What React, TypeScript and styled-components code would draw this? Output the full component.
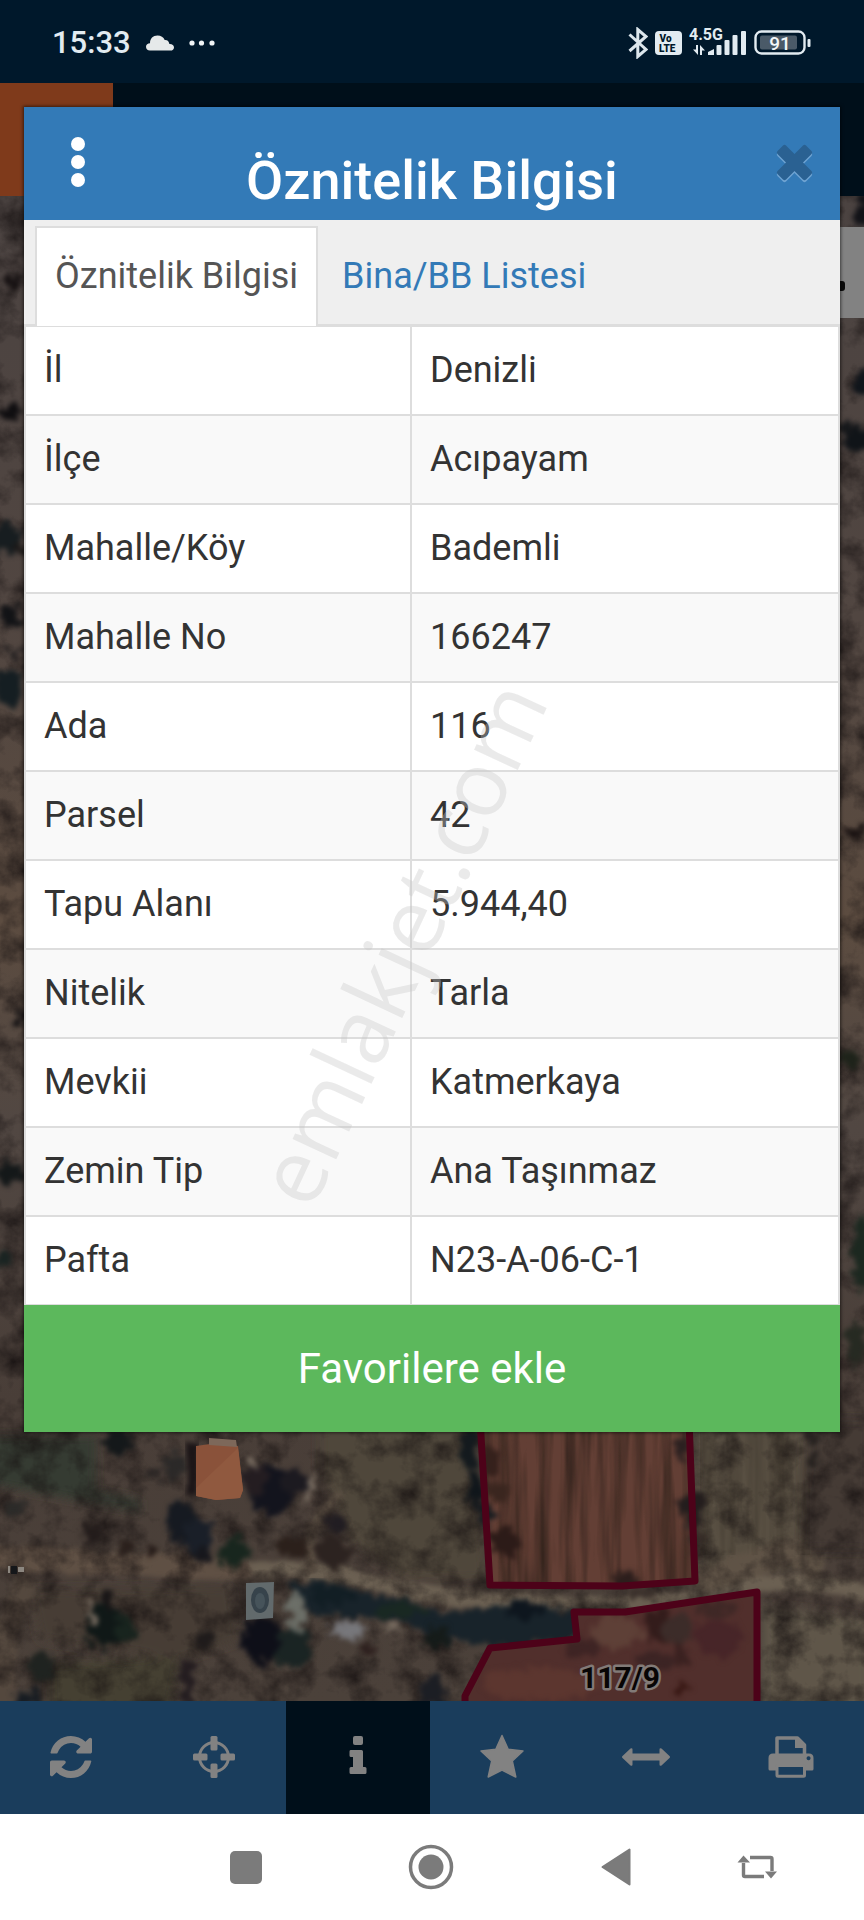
import React, { useState } from "react";
import styled, { createGlobalStyle } from "styled-components";

const GlobalStyle = createGlobalStyle`
  *, *::before, *::after { box-sizing: border-box; }
  html, body { margin: 0; padding: 0; }
  body { font-family: Roboto, "Noto Sans", sans-serif; background: #00182b; color: #333; }
  button { font: inherit; color: inherit; border: 0; padding: 0; background: none; cursor: pointer; }
`;

const Screen = styled.div`
  display: flex;
  flex-direction: column;
  min-height: 100vh;
`;

/* ---------- status bar ---------- */

const StatusBar = styled.header`
  display: flex;
  align-items: center;
  justify-content: space-between;
  height: 83px;
  padding: 2px 52px 0;
  background: #00182b;
  color: #e2ebf1;
`;

const StatusGroup = styled.div<{ $gap: number }>`
  display: flex;
  align-items: center;
  gap: ${(p) => p.$gap}px;
`;

const Clock = styled.time`
  font-size: 31px;
  line-height: 36px;
  font-weight: 500;
`;

/* ---------- stage: map page with the dialog over it ---------- */

const Stage = styled.main`
  position: relative;
  flex: 1;
  overflow: hidden;
`;

const Backdrop = styled.div`
  position: absolute;
  inset: 0;
  display: flex;
  flex-direction: column;
`;

const AppHeader = styled.div`
  height: 113px;
  background: #000f1a;
  flex: none;
`;

const Brand = styled.div`
  width: 113px;
  height: 100%;
  background: #7f3a1b;
`;

const MapArea = styled.div`
  position: relative;
  flex: 1;
  min-height: 0;
  background: #4b413a;

  > svg { display: block; width: 100%; height: 100%; }
`;

const SearchStrip = styled.div`
  position: absolute;
  top: 31px;
  right: 0;
  width: 60px;
  height: 91px;
  display: flex;
  align-items: center;
  justify-content: center;
  padding-top: 26px;
  background: #828282;
`;

const StripMark = styled.span`
  width: 22px;
  height: 10px;
  border-radius: 3px;
  background: #0a0a0a;
`;

/* ---------- dialog ---------- */

const Dialog = styled.section`
  position: relative;
  margin: 24px 24px 0;
  background: #fff;
  box-shadow: 0 0 3px 1px rgba(0, 0, 0, 0.55);
`;

const DialogHeader = styled.div`
  display: grid;
  grid-template-columns: 108px 1fr 108px;
  align-items: center;
  height: 113px;
  background: #337ab7;
  color: #fff;
`;

const Title = styled.h1`
  margin: 0;
  padding-top: 35px;
  font-size: 54px;
  line-height: 56px;
  font-weight: 500;
  text-align: center;
  white-space: nowrap;
`;

const HeaderButton = styled.button<{ $align?: string }>`
  display: flex;
  align-items: center;
  justify-content: ${(p) => p.$align ?? "center"};
  height: 100%;
  padding: 0 26px;
`;

const Tabs = styled.div`
  display: flex;
  gap: 4px;
  height: 106px;
  padding: 6px 11px 0;
  background: #efefef;
  border-bottom: 2px solid #ddd;
`;

const Tab = styled.button<{ $active: boolean }>`
  height: 100px;
  padding: 0 18px 2px;
  border: 2px solid ${(p) => (p.$active ? "#ddd" : "transparent")};
  border-bottom: 0;
  background: ${(p) => (p.$active ? "#fff" : "transparent")};
  color: ${(p) => (p.$active ? "#555" : "#337ab7")};
  font-size: 36px;
  line-height: 45px;
  white-space: nowrap;
`;

const Attributes = styled.table`
  width: 100%;
  table-layout: fixed;
  border-collapse: separate;
  border-spacing: 0;
  border: solid #ddd;
  border-width: 1px 2px 0;
  font-size: 36px;
  line-height: 45px;

  tr:nth-child(even) { background: #f9f9f9; }

  th, td {
    padding: 21px 18px;
    font-weight: 400;
    text-align: left;
    border-bottom: 2px solid #ddd;
  }

  tr:last-child th, tr:last-child td { border-bottom-width: 1px; }

  th { width: 386px; border-right: 2px solid #ddd; }

  @media (max-width: 700px) {
    th { width: 47%; }
  }
`;

const FavoriteButton = styled.button`
  display: block;
  width: 100%;
  height: 127px;
  background: #5cb85c;
  color: #fff;
  font-size: 42px;
  line-height: 48px;
`;

const Watermark = styled.span`
  position: absolute;
  left: 46%;
  top: 63%;
  transform: translate(-50%, -50%) rotate(-65deg);
  font-family: "Open Sans", sans-serif;
  font-size: 90px;
  line-height: 90px;
  white-space: nowrap;
  color: #c6c6c6;
  opacity: 0.35;
  pointer-events: none;
`;

/* ---------- bottom bars ---------- */

const Toolbar = styled.nav`
  display: grid;
  grid-template-columns: 142fr repeat(4, 144fr) 146fr;
  height: 113px;
  background: #1a3d5c;
`;

const Tool = styled.button<{ $active: boolean }>`
  display: flex;
  align-items: center;
  justify-content: center;
  padding-bottom: 2px;
  background: ${(p) => (p.$active ? "#000f1a" : "transparent")};
  color: #828282;
`;

const SystemNav = styled.nav`
  display: grid;
  grid-template-columns: 154fr 184fr 186fr 184fr 98fr 58fr;
  height: 106px;
  background: #fff;
  color: #7b7b7b;

  button:first-child { grid-column-start: 2; }
`;

const NavButton = styled.button`
  display: flex;
  align-items: center;
  justify-content: center;
`;

/* ---------- status icons ---------- */

const CloudIcon = () => (
  <svg width="28" height="16" viewBox="0 0 28 16" fill="#e6e9ea" aria-hidden="true">
    <path d="M4 15.500C1.500 15.500 0 14 0 11.800 0 9.500 1.800 8.200 4 8.200 4 3.500 7 .5 11.500.5c3.500 0 6 1.600 7.200 4.500 2.800-.2 4.300 1.500 4.700 4 2.600-.2 4.600 1.200 4.600 3.400 0 2-1.500 3.100-3.600 3.100z" />
  </svg>
);

const MoreDots = () => (
  <svg width="26" height="6" viewBox="0 0 26 6" fill="#f0f4f6" aria-hidden="true">
    <circle cx="3" cy="3" r="2.600" />
    <circle cx="12.500" cy="3" r="2.600" />
    <circle cx="23" cy="3" r="2.600" />
  </svg>
);

const BluetoothIcon = () => (
  <svg width="20" height="32" viewBox="0 0 20 32" fill="none" stroke="#dce6ec" strokeWidth="3" aria-hidden="true">
    <path d="M1.500 7.500 18 22.500 9.800 29.500V2.500L18 9.500 1.500 24" />
  </svg>
);

const VolteIcon = () => (
  <svg width="27" height="24" viewBox="0 0 27 24" aria-label="VoLTE">
    <rect width="27" height="24" rx="4" fill="#e2ebf1" />
    <g fill="#00182b" fontFamily="Roboto, sans-serif" fontWeight="900">
      <text x="4.500" y="11" fontSize="10">Vo</text>
      <text x="4" y="21" fontSize="10">LTE</text>
    </g>
  </svg>
);

const SignalIcon = () => (
  <svg width="58" height="42" viewBox="0 -6 58 42" fill="#e2ebf1" aria-label="4.5G">
    <text x="0" y="12" fontSize="16" fontWeight="700" fontFamily="Roboto, sans-serif">4.5G</text>
    <path d="M9 17v10L4 21.500h3V17zM11 27v-10l5 5.500h-3V27z" />
    <path d="M19 27v-3l6-3v6z" />
    <rect x="27.500" y="17" width="5" height="10" rx="1" />
    <rect x="35.500" y="12" width="5" height="15" rx="1" />
    <rect x="43.500" y="7" width="5" height="20" rx="1" />
    <rect x="52" y="3" width="5" height="24" rx="1" />
  </svg>
);

const BatteryIcon = () => (
  <svg width="58" height="26" viewBox="0 0 58 26" aria-label="91">
    <rect x="1.500" y="1.500" width="49" height="22" rx="6" fill="none" stroke="#e2ebf1" strokeWidth="2.400" />
    <rect x="6" y="5.500" width="37" height="14" rx="2" fill="#4a5a68" />
    <rect x="53.500" y="9" width="3" height="8" rx="1" fill="#e2ebf1" />
    <text x="26" y="19.500" textAnchor="middle" fontSize="19" fontWeight="500" fontFamily="Roboto, sans-serif" fill="#f2f6f8">91</text>
  </svg>
);

/* ---------- dialog icons ---------- */

const KebabIcon = () => (
  <svg width="14" height="54" viewBox="0 0 14 54" fill="#fff" aria-hidden="true">
    <circle cx="7" cy="7" r="7" />
    <circle cx="7" cy="25" r="7" />
    <circle cx="7" cy="43" r="7" />
  </svg>
);

const CROSS =
  "M10 1.500 18.500 10 27 1.500q1.500-1.500 3 0l5.500 5.500q1.500 1.500 0 3L27 18.500l8.500 8.500q1.500 1.500 0 3L30 35.500q-1.500 1.500-3 0L18.500 27 10 35.500q-1.500 1.500-3 0L1.500 30q-1.500-1.500 0-3L10 18.500 1.500 10Q0 8.500 1.500 7L7 1.500q1.500-1.500 3 0z";

const CloseIcon = () => (
  <svg width="38" height="40" viewBox="0 0 38 40" aria-hidden="true">
    <path d={CROSS} fill="#6ea3d2" transform="translate(0 2)" />
    <path d={CROSS} fill="#2a6192" />
  </svg>
);

/* ---------- toolbar icons ---------- */

const RefreshIcon = () => (
  <svg width="42" height="42" viewBox="0 0 1536 1536" fill="currentColor" aria-hidden="true">
    <path d="M1511 928q0 5-1 7-64 268-268 434.500T764 1536q-146 0-282.500-55T238 1324l-129 129q-19 19-45 19t-45-19-19-45V960q0-26 19-45t45-19h448q26 0 45 19t19 45-19 45l-137 137q71 66 161 102t187 36q134 0 250-65t186-179q11-17 53-117 8-23 30-23h192q13 0 22.500 9.500t9.500 22.500zm25-800v448q0 26-19 45t-45 19h-448q-26 0-45-19t-19-45 19-45l138-138Q969 256 768 256q-134 0-250 65T332 500q-11 17-53 117-8 23-30 23H50q-13 0-22.500-9.500T18 608v-7q65-268 270-434.500T768 0q146 0 284 55.500T1297 212l130-129q19-19 45-19t45 19 19 45z" />
  </svg>
);

const LocateIcon = () => (
  <svg width="42" height="42" viewBox="0 0 42 42" fill="currentColor" aria-hidden="true">
    <circle cx="21" cy="21" r="14.500" fill="none" stroke="currentColor" strokeWidth="3" />
    <rect x="17.500" y="0" width="7" height="14.500" rx="1.500" />
    <rect x="17.500" y="27.500" width="7" height="14.500" rx="1.500" />
    <rect x="0" y="17.500" width="14.500" height="7" rx="1.500" />
    <rect x="27.500" y="17.500" width="14.500" height="7" rx="1.500" />
  </svg>
);

const InfoIcon = () => (
  <svg width="18" height="42" viewBox="0 0 18 42" fill="currentColor" aria-hidden="true">
    <rect x="4" y="0" width="10" height="9" rx="2" />
    <path d="M1.500 14H12.500Q14 14 14 15.500V31h2q1.500 0 1.500 1.500v4q0 1.500-1.500 1.500H2Q.5 38 .5 36.500v-4Q.5 31 2 31h2V21H2Q.5 21 .5 19.500v-4Q.5 14 1.500 14z" />
  </svg>
);

const StarIcon = () => (
  <svg width="46" height="46" viewBox="0 0 46 46" fill="currentColor" stroke="currentColor" strokeWidth="1.500" strokeLinejoin="round" aria-hidden="true">
    <path d="M23 1.500 29.200 15.200 44 17 33.300 27 36.800 43 23 36.200 9.200 43 12.700 27 2 17l14.800-1.800z" />
  </svg>
);

const ArrowsIcon = () => (
  <svg width="48" height="20" viewBox="0 0 48 20" fill="currentColor" aria-hidden="true">
    <path d="M.5 9 8.500 1.500Q10.500.5 10.500 2.500V6.500H37.500V2.500Q37.500.5 39.500 1.500L47.500 9q1 1 0 2L39.500 18.500q-2 1-2-1V13.500H10.500v4q0 2-2 1L.5 11q-1-1 0-2z" />
  </svg>
);

const PrintIcon = () => (
  <svg width="46" height="42" viewBox="0 0 46 42" aria-hidden="true">
    <path fill="none" stroke="currentColor" strokeWidth="3.500" strokeLinejoin="round" d="M9 21V2h20.500L36.500 9V21" />
    <path fill="currentColor" d="M27 2h4l7 7v3H27z" />
    <path fill="currentColor" fillRule="evenodd" d="M5 17.500h36q4.500 0 4.500 4.500v11q0 1.500-1.500 1.500h-6v-4H8v4H2Q.5 34.500.5 33V22q0-4.500 4.500-4.500zM40.500 20.300a2 2 0 1 0 .1 0z" />
    <rect x="9" y="29.500" width="27.500" height="10.700" rx="1" fill="none" stroke="currentColor" strokeWidth="3" />
  </svg>
);

/* ---------- system navigation icons ---------- */

const RecentsIcon = () => (
  <svg width="32" height="33" viewBox="0 0 32 33" fill="currentColor" aria-hidden="true">
    <rect width="32" height="33" rx="5" />
  </svg>
);

const HomeIcon = () => (
  <svg width="46" height="46" viewBox="0 0 46 46" fill="currentColor" aria-hidden="true">
    <circle cx="23" cy="23" r="20.500" fill="none" stroke="currentColor" strokeWidth="3.500" />
    <circle cx="23" cy="23" r="12.500" />
  </svg>
);

const BackIcon = () => (
  <svg width="30" height="38" viewBox="0 0 30 38" fill="currentColor" stroke="currentColor" strokeWidth="2" strokeLinejoin="round" aria-hidden="true">
    <path d="M1.500 19 28.500 1.500v35z" />
  </svg>
);

const RotateIcon = () => (
  <svg width="40" height="24" viewBox="0 0 40 24" fill="none" stroke="currentColor" strokeWidth="3.400" aria-hidden="true">
    <path d="M13 2.500H33.500Q35 2.500 35 4V16" />
    <path d="M27 21.500H8Q6.500 21.500 6.500 20V8" />
    <path fill="currentColor" stroke="none" d="M6.500.5 13 7.500H.5zM34 23.500l6-7H28z" />
  </svg>
);

/* ---------- aerial map ---------- */

type Blob = [x: number, y: number, rx: number, ry: number, fill: string];

const BLOBS: Blob[] = [
  // strip left of the dialog
  [12, 282, 11, 5, "#161112"], [10, 412, 12, 8, "#0f0e10"], [8, 538, 14, 16, "#171d20"], [20, 548, 8, 5, "#1b1918"],
  [10, 616, 10, 9, "#121316"], [14, 652, 8, 5, "#1c1a1c"], [8, 688, 14, 18, "#151e22"], [24, 1016, 7, 8, "#141214"],
  [12, 1172, 15, 10, "#141819"], [4, 1262, 9, 7, "#1a2422"],
  // strip right of the dialog
  [864, 208, 10, 18, "#111217"], [864, 384, 11, 13, "#10151b"], [858, 440, 16, 12, "#101418"], [846, 428, 8, 8, "#15171a"],
  [854, 832, 8, 6, "#171010"], [850, 1060, 13, 7, "#1e231a"], [862, 1250, 10, 40, "#1c2820"], [856, 1345, 10, 22, "#262a22"],
  // trees around the farm house
  [116, 1442, 15, 12, "#14181a"], [174, 1466, 10, 14, "#2b2928"], [156, 1474, 8, 6, "#2a2625"], [272, 1490, 23, 24, "#13141d"],
  [256, 1480, 12, 14, "#241d21"], [294, 1482, 14, 12, "#1c1a20"], [180, 1520, 15, 20, "#161a21"], [198, 1536, 16, 17, "#1a1f28"],
  [202, 1556, 10, 8, "#17171c"], [234, 1552, 16, 14, "#18261e"], [92, 1534, 12, 8, "#231c1b"], [290, 1546, 14, 11, "#2b201b"],
  [334, 1552, 17, 17, "#2c2320"], [336, 1524, 9, 9, "#211d22"], [126, 1546, 9, 5, "#2a201c"], [152, 1552, 6, 5, "#241a17"],
  [16, 1508, 12, 5, "#2c2b29"],
  // lower left
  [106, 1626, 20, 22, "#101817"], [124, 1630, 11, 14, "#18241e"], [108, 1602, 6, 11, "#191617"], [264, 1640, 22, 24, "#0e0f18"],
  [294, 1648, 18, 20, "#1a2423"], [204, 1640, 11, 7, "#1f1b1b"], [42, 1668, 13, 14, "#1f2320"], [28, 1698, 14, 8, "#171c22"],
  [188, 1684, 8, 24, "#241d20"], [434, 1692, 14, 15, "#1c1e24"], [368, 1650, 8, 7, "#2d201e"], [436, 1638, 15, 10, "#151b19"],
  // field edges
  [468, 1450, 8, 22, "#141a1e"], [476, 1488, 7, 18, "#10161b"], [484, 1514, 7, 14, "#181c20"],
  [692, 1508, 13, 16, "#231d1d"], [682, 1450, 6, 14, "#2b2020"], [694, 1536, 7, 12, "#362b27"],
  [640, 1594, 18, 5, "#3a302b"], [812, 1460, 6, 8, "#24201e"], [815, 1438, 5, 8, "#24201e"],
];

const HEDGE =
  "M290 1582 330 1582 370 1594 420 1602 440 1616 462 1614 474 1608 530 1604 574 1612 577 1638 500 1646 470 1642 440 1640 410 1624 370 1618 330 1616 304 1610z";

const AerialMap = () => (
  <svg viewBox="0 196 864 1505" preserveAspectRatio="xMidYMax slice" role="img" aria-label="Harita">
    <defs>
      <linearGradient id="soil" x1="0" y1="0" x2="0" y2="1">
        <stop offset="0" stopColor="#4b4341" />
        <stop offset="0.280" stopColor="#514641" />
        <stop offset="0.480" stopColor="#5c4c40" />
        <stop offset="0.620" stopColor="#514742" />
        <stop offset="0.800" stopColor="#493e38" />
        <stop offset="1" stopColor="#4b413a" />
      </linearGradient>
      <filter id="rough" x="-5%" y="-5%" width="110%" height="110%" colorInterpolationFilters="sRGB">
        <feTurbulence type="fractalNoise" baseFrequency="0.100" numOctaves="3" seed="7" />
        <feDisplacementMap in="SourceGraphic" scale="22" xChannelSelector="R" yChannelSelector="G" />
        <feGaussianBlur stdDeviation="2.400" />
      </filter>
      <filter id="edge" x="-5%" y="-50%" width="110%" height="200%" colorInterpolationFilters="sRGB">
        <feTurbulence type="fractalNoise" baseFrequency="0.050" numOctaves="2" seed="5" />
        <feDisplacementMap in="SourceGraphic" scale="8" xChannelSelector="R" yChannelSelector="G" />
        <feGaussianBlur stdDeviation="2.500" />
      </filter>
      <filter id="soft"><feGaussianBlur stdDeviation="5" /></filter>
      <filter id="grain" x="0" y="0" width="100%" height="100%" colorInterpolationFilters="sRGB">
        <feTurbulence type="fractalNoise" baseFrequency="0.035" numOctaves="5" seed="3" />
        <feColorMatrix values="0 0 0 0 0.080  0 0 0 0 0.060  0 0 0 0 0.060  0 1.500 0 0 -0.600" />
      </filter>
      <filter id="furrows" x="0" y="0" width="100%" height="100%" colorInterpolationFilters="sRGB">
        <feTurbulence type="fractalNoise" baseFrequency="0.080 0.006" numOctaves="3" seed="11" />
        <feColorMatrix values="0 0 0 0 0.100  0 0 0 0 0.080  0 0 0 0 0.060  0 1.500 0 0 -0.550" />
      </filter>
      <clipPath id="parcelA"><path d="M480 1420 490 1585 622 1586 695 1581 689 1420z" /></clipPath>
    </defs>

    <rect y="196" width="864" height="1505" fill="url(#soil)" />

    <g filter="url(#soft)">
      <path d="M-10 1436H96V1490L140 1500V1512L-10 1484z" fill="#363a32" />
      <path d="M320 1420H470L486 1580 400 1578 350 1540 320 1470z" fill="#50473b" />
      <path d="M692 1420H806L800 1570 700 1580z" fill="#595043" />
      <path d="M50 1664 180 1656 170 1710H50z" fill="#454033" />
      <path d="M762 1606 870 1620V1710H762z" fill="#5e564a" />
      <path d="M30 1590 230 1586 240 1640 180 1660 40 1640z" fill="#473c36" />
      <path d="M812 1420H870V1550H800z" fill="#443b35" />
    </g>

    <g filter="url(#edge)" fill="none" strokeLinecap="round" strokeLinejoin="round">
      <path d="M-20 1556C60 1560 140 1566 240 1569S320 1570 360 1580 440 1598 520 1603 680 1604 720 1592 800 1574 890 1600" stroke="#6b6052" strokeWidth="17" />
      <path d="M-20 1556C60 1560 140 1566 240 1569" stroke="#5f5044" strokeWidth="24" />
      <path d="M312 1568 310 1530 336 1496" stroke="#5b4f43" strokeWidth="11" />
      <path d="M6 1710 4 1640 24 1586" stroke="#54483e" strokeWidth="22" />
      <path d="M706 1580 790 1550 812 1566" stroke="#5f5346" strokeWidth="26" />
    </g>

    <rect y="196" width="864" height="1505" filter="url(#grain)" />

    <path d="M480 1420 490 1585 622 1586 695 1581 689 1420z" fill="#633f35" />
    <g clipPath="url(#parcelA)">
      <rect x="480" y="1420" width="220" height="170" filter="url(#furrows)" opacity="0.800" />
      <g filter="url(#rough)">
        <ellipse cx="490" cy="1462" rx="10" ry="14" fill="#35211c" />
        <ellipse cx="498" cy="1490" rx="11" ry="11" fill="#3a261f" />
        <ellipse cx="504" cy="1542" rx="15" ry="14" fill="#2c1b18" />
        <ellipse cx="626" cy="1580" rx="13" ry="10" fill="#2c1e1c" />
      </g>
    </g>
    <rect x="700" y="1425" width="110" height="130" filter="url(#furrows)" opacity="0.400" />

    <g filter="url(#rough)">
      <path d={HEDGE} fill="#18232a" />
      <ellipse cx="330" cy="1596" rx="24" ry="9" fill="#121e24" />
      <ellipse cx="400" cy="1610" rx="26" ry="7" fill="#192822" />
      <ellipse cx="524" cy="1610" rx="18" ry="10" fill="#0e161e" />
    </g>

    <path d="M465 1710V1696L490 1648 577 1639 574 1612H625L757 1592V1710z" fill="#512f2c" />
    <g filter="url(#rough)">
      <ellipse cx="616" cy="1632" rx="26" ry="16" fill="#5e4037" />
      <ellipse cx="540" cy="1684" rx="60" ry="16" fill="#5c362f" />
      <ellipse cx="658" cy="1626" rx="14" ry="18" fill="#331c1b" />
      <ellipse cx="678" cy="1628" rx="16" ry="16" fill="#3c2c29" />
      <ellipse cx="718" cy="1638" rx="24" ry="18" fill="#472528" />
      <ellipse cx="655" cy="1662" rx="20" ry="10" fill="#3c2424" />
      <ellipse cx="682" cy="1654" rx="7" ry="12" fill="#3a2120" />
      <ellipse cx="582" cy="1648" rx="20" ry="9" fill="#3e2424" />
      <ellipse cx="714" cy="1608" rx="20" ry="8" fill="#3f2826" />
      <ellipse cx="683" cy="1688" rx="7" ry="6" fill="#361612" />
    </g>

    <g filter="url(#rough)">
      {BLOBS.map(([x, y, rx, ry, fill], i) => (
        <ellipse key={i} cx={x} cy={y} rx={rx} ry={ry} fill={fill} />
      ))}
      <path d="M314 1476 306 1500M246 1456 258 1468M386 1630 400 1626M86 1598 94 1620" stroke="#7c7064" strokeWidth="6" />
      <ellipse cx="350" cy="1630" rx="18" ry="10" fill="#77777b" />
      <ellipse cx="296" cy="1612" rx="9" ry="20" fill="#6c6f68" />
    </g>

    {/* farm house and water tank */}
    <g filter="url(#edge)">
      <path d="M186 1442h12v54h-12z" fill="#1b1517" />
    </g>
    <path d="M196 1446 210 1444 238 1446 243 1490 240 1498 216 1500 196 1496z" fill="#8a523a" />
    <path d="M196 1488 238 1448 243 1490 240 1498 216 1500 196 1496z" fill="#90593f" />
    <path d="M209 1438 236 1440 237 1447 209 1445z" fill="#7d685a" />
    <path d="M246 1583 274 1582 273 1618 246 1620z" fill="#626a6c" />
    <ellipse cx="260" cy="1600" rx="9" ry="13" fill="#37434b" />
    <ellipse cx="260" cy="1601" rx="5" ry="8" fill="#46535a" />
    <path d="M8 1566h2v7H8zM18 1567h6v5h-6z" fill="#8c8780" />
    <path d="M11 1566h6v8h-6z" fill="#15171a" />

    <g fill="none" stroke="#4d0219" strokeWidth="7" strokeLinejoin="round">
      <path d="M480 1420 490 1585 622 1586 695 1581 689 1420" />
      <path d="M465 1710V1696L490 1648 577 1639 574 1612H625L757 1592V1710" />
    </g>
    <text x="620" y="1688" textAnchor="middle" fontFamily="Roboto, sans-serif" fontWeight="700" fontSize="30" fill="#080505" stroke="#827a77" strokeWidth="5" paintOrder="stroke" strokeLinejoin="round">
      117/9
    </text>
  </svg>
);

/* ---------- page ---------- */

const ROWS: [string, string][] = [
  ["İl", "Denizli"],
  ["İlçe", "Acıpayam"],
  ["Mahalle/Köy", "Bademli"],
  ["Mahalle No", "166247"],
  ["Ada", "116"],
  ["Parsel", "42"],
  ["Tapu Alanı", "5.944,40"],
  ["Nitelik", "Tarla"],
  ["Mevkii", "Katmerkaya"],
  ["Zemin Tip", "Ana Taşınmaz"],
  ["Pafta", "N23-A-06-C-1"],
];

const TABS = ["Öznitelik Bilgisi", "Bina/BB Listesi"];

const TOOLS = [
  { label: "Yenile", Icon: RefreshIcon },
  { label: "Konum", Icon: LocateIcon },
  { label: "Bilgi", Icon: InfoIcon },
  { label: "Favoriler", Icon: StarIcon },
  { label: "Ölçüm", Icon: ArrowsIcon },
  { label: "Yazdır", Icon: PrintIcon },
];

const SYSTEM = [
  { label: "Son uygulamalar", Icon: RecentsIcon },
  { label: "Ana ekran", Icon: HomeIcon },
  { label: "Geri", Icon: BackIcon },
  { label: "Döndür", Icon: RotateIcon },
];

export default function App() {
  const [tab, setTab] = useState(0);
  const [tool, setTool] = useState(2);

  return (
    <Screen>
      <GlobalStyle />
      <StatusBar>
        <StatusGroup $gap={15}>
          <Clock>15:33</Clock>
          <CloudIcon />
          <MoreDots />
        </StatusGroup>
        <StatusGroup $gap={7}>
          <BluetoothIcon />
          <VolteIcon />
          <SignalIcon />
          <BatteryIcon />
        </StatusGroup>
      </StatusBar>

      <Stage>
        <Backdrop>
          <AppHeader>
            <Brand />
          </AppHeader>
          <MapArea>
            <AerialMap />
            <SearchStrip>
              <StripMark />
            </SearchStrip>
          </MapArea>
        </Backdrop>

        <Dialog role="dialog" aria-labelledby="dialog-title">
          <DialogHeader>
            <HeaderButton aria-label="Menü">
              <KebabIcon />
            </HeaderButton>
            <Title id="dialog-title">Öznitelik Bilgisi</Title>
            <HeaderButton aria-label="Kapat" $align="flex-end">
              <CloseIcon />
            </HeaderButton>
          </DialogHeader>
          <Tabs role="tablist">
            {TABS.map((name, i) => (
              <Tab key={name} role="tab" aria-selected={tab === i} $active={tab === i} onClick={() => setTab(i)}>
                {name}
              </Tab>
            ))}
          </Tabs>
          <Attributes>
            <tbody>
              {ROWS.map(([name, value]) => (
                <tr key={name}>
                  <th scope="row">{name}</th>
                  <td>{value}</td>
                </tr>
              ))}
            </tbody>
          </Attributes>
          <FavoriteButton>Favorilere ekle</FavoriteButton>
          <Watermark aria-hidden="true">emlakjet.com</Watermark>
        </Dialog>
      </Stage>

      <Toolbar>
        {TOOLS.map(({ label, Icon }, i) => (
          <Tool key={label} aria-label={label} $active={tool === i} onClick={() => setTool(i)}>
            <Icon />
          </Tool>
        ))}
      </Toolbar>
      <SystemNav>
        {SYSTEM.map(({ label, Icon }) => (
          <NavButton key={label} aria-label={label}>
            <Icon />
          </NavButton>
        ))}
      </SystemNav>
    </Screen>
  );
}
